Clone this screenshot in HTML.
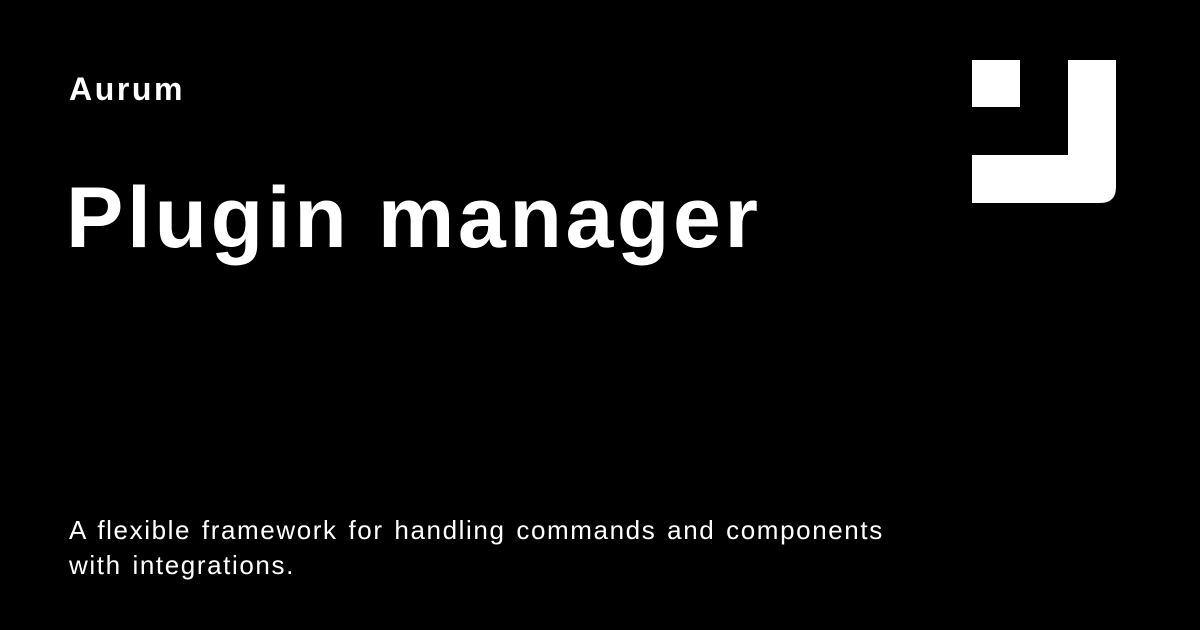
<!DOCTYPE html>
<html><head><style>
html,body{margin:0;padding:0;background:#000;}
body{width:1200px;height:630px;position:relative;overflow:hidden;font-family:"Liberation Sans",sans-serif;color:#fff;}
.a{position:absolute;left:69px;top:70px;font-size:32px;font-weight:bold;line-height:38px;letter-spacing:2.6px;}
.t{position:absolute;left:66px;top:168px;font-size:86px;font-weight:bold;line-height:100px;letter-spacing:3.6px;}
.d{position:absolute;left:69px;top:513px;font-size:26px;line-height:35px;letter-spacing:1.6px;word-spacing:2px;}
</style></head><body>
<div class="a">Aurum</div>
<div class="t">Plugin manager</div>
<div class="d">A flexible framework for handling commands and components<br>with integrations.</div>
<svg style="position:absolute;left:0;top:0" width="1200" height="630">
<rect x="972" y="60" width="48" height="47" fill="#fff"/>
<path d="M1068 60H1116V187Q1116 203 1100 203H972V155H1068Z" fill="#fff"/>
</svg>
</body></html>
